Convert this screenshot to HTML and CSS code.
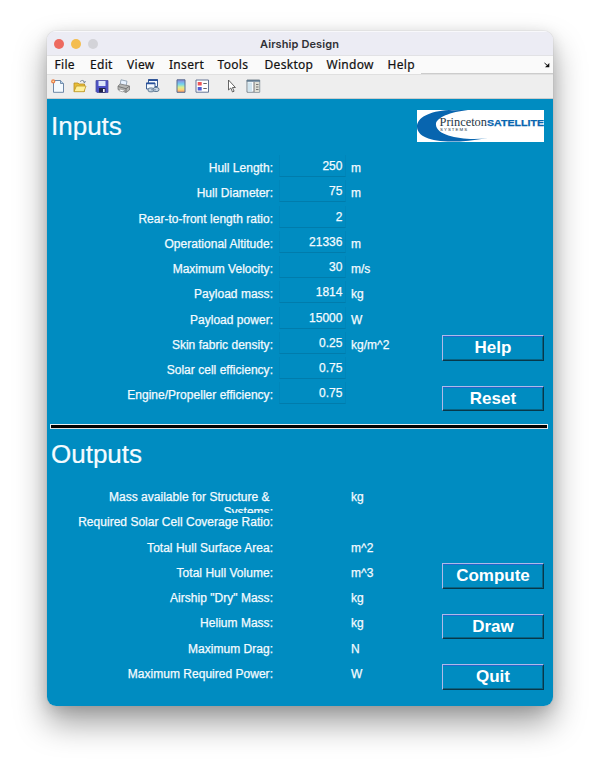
FILE: index.html
```html
<!DOCTYPE html>
<html lang="en">
<head>
<meta charset="utf-8">
<title>Airship Design</title>
<link rel="stylesheet" href="styles.css">
</head>
<body>
<main class="window">
  <header class="titlebar">
    <div class="lights"><i class="red"></i><i class="yellow"></i><i class="gray"></i></div>
    <h1>Airship Design</h1>
  </header>
  <nav class="menubar">
    <span class="file">File</span><span class="edit">Edit</span><span class="view">View</span><span class="insert">Insert</span><span class="tools">Tools</span><span class="desktop">Desktop</span><span class="win">Window</span><span class="help">Help</span>
    <div class="menu-rest"><svg width="6" height="6" viewBox="0 0 6 6"><path d="M.5 1L4 4" stroke="#111"/><path d="M5.3 1v4.3H1z" fill="#111"/></svg></div>
  </nav>
  <div class="toolbar">
    <svg width="14" height="14" viewBox="0 0 14 14"><path d="M2.5 1.5h7l3 3v8.8h-10z" fill="#f4faff" stroke="#5d7b9c" stroke-width=".9"/><path d="M9.5 1.5v3h3" fill="#b8d3ef" stroke="#5d7b9c" stroke-width=".8"/><circle cx="2.2" cy="2.4" r="2.1" fill="#e9814d"/><circle cx="2.2" cy="2.4" r=".8" fill="#ffe5a0"/></svg>
    <svg width="14" height="14" viewBox="0 0 14 14"><path d="M1 12.5V4h4l1 1h5.5v7.5z" fill="#e9bd36" stroke="#b58d22" stroke-width=".8"/><path d="M1 12.7L3.4 7H13l-2 5.7z" fill="#fff09a" stroke="#bd982a" stroke-width=".8"/><path d="M7 2.8c2-2.2 4-1.4 4.5.7M10.2 2.7l1.4 1 .9-1.5" fill="none" stroke="#66778c" stroke-width=".9"/></svg>
    <svg width="14" height="14" viewBox="0 0 14 14"><path d="M1 1.5h12v12H2l-1-1z" fill="#4b50c5" stroke="#4d50a0" stroke-width=".8"/><path d="M3.5 2h7v5h-7z" fill="#dce7fa"/><path d="M4 9h6.5v4.5H4z" fill="#202348"/><path d="M8 10h1.7v3H8z" fill="#f2f4ff"/></svg>
    <svg width="14" height="14" viewBox="0 0 14 14"><path d="M3 6L4 .8l6 1.4-1 5z" fill="#e7f2ff" stroke="#8296aa" stroke-width=".8"/><path d="M1 7l2.3-2 9.2 2v4l-3.5 2.5L1 10.5z" fill="#b5b6b4" stroke="#777" stroke-width=".8"/><path d="M1.3 7.5L9 9.7l3.2-2.4M9 9.7v3.6" fill="none" stroke="#666" stroke-width=".8"/><path d="M3 10l4.5 1.3L6 13l-4-1.3z" fill="#fff" stroke="#777" stroke-width=".5"/></svg>
    <svg class="link" width="15" height="15" viewBox="0 0 15 15"><path d="M3.5 1.5h9v7h-9z" fill="#f4faff" stroke="#3c5f94"/><path d="M3 2.2h10" stroke="#28509c" stroke-width="1.6"/><path d="M1.5 5h8.5v6H1.5z" fill="#f4faff" stroke="#3c5f94"/><path d="M1 5.5h9" stroke="#28509c" stroke-width="1.6"/><rect x="3" y="10" width="6" height="3.8" rx="1.9" fill="#c7d6e5" stroke="#647d96"/><rect x="8" y="9.5" width="6" height="4" rx="2" fill="#c7d6e5" stroke="#647d96"/><path d="M6 11.8h5" stroke="#8195a8"/></svg>
    <svg class="colorbar" width="14" height="14" viewBox="0 0 14 14"><defs><linearGradient id="bar" x2="0" y2="1"><stop stop-color="#8c82df"/><stop offset=".35" stop-color="#72d4ee"/><stop offset=".6" stop-color="#d8ef91"/><stop offset=".8" stop-color="#ffd474"/><stop offset="1" stop-color="#f28c68"/></linearGradient></defs><path d="M3 .8h8v12.5H3z" fill="url(#bar)" stroke="#596d8d"/></svg>
    <svg class="legend" width="15" height="14" viewBox="0 0 15 14"><path d="M1 1h12.5v12.2H1z" fill="#fff" stroke="#647596"/><path d="M2.7 2.9h4v3.5h-4z" fill="#ee5557"/><path d="M2.7 7.9h4v3.5h-4z" fill="#4e5bd2"/><path d="M8.3 4.5h3.5M8.3 9.5h3.5" stroke="#666" stroke-width="1.2"/></svg>
    <svg class="pointer" width="14" height="14" viewBox="0 0 14 14"><path d="M3.5 1v10l2.3-2 1.7 4 1.6-.8-1.7-3.7h3z" fill="#fff" stroke="#555" stroke-width=".9"/></svg>
    <svg class="inspector" width="15" height="14" viewBox="0 0 15 14"><path d="M1 1h12.7v12.2H1z" fill="#f8fcff" stroke="#77858f"/><path d="M.8 1.8h13" stroke="#627b90" stroke-width="1.8"/><path d="M8 3h5.3v10H8z" fill="#dedfd6"/><path d="M8 3v10" stroke="#777"/><path d="M10 5.5h2.5M10 8h2.5M10 10.5h2.5" stroke="#777"/><path d="M2 3.5h4v9H2z" fill="#d1e5ef"/></svg>
  </div>
  <section class="inputs">
    <div class="heading"><h2>Inputs</h2>
      <svg class="logo" width="127" height="32" viewBox="0 0 127 32"><path fill="#fff" d="M0 0h127v32H0z"/><path d="M51 0C44 0 38 .5 32 0 12 1 0 8 0 16.5 0 30 26 36 71 28 50 31 20 27 19 15 18 8 33 2 51 0z" fill="#0865af"/><text x="22.5" y="16" textLength="47.5" lengthAdjust="spacingAndGlyphs" font-family="Liberation Serif, serif" font-size="12" fill="#263746">Princeton</text><text x="70" y="16" textLength="57" lengthAdjust="spacingAndGlyphs" font-family="Liberation Sans, sans-serif" font-weight="bold" font-size="9" fill="#0865af" stroke="#0865af" stroke-width=".25">SATELLITE</text><text x="23" y="21.3" textLength="27" font-family="Liberation Sans, sans-serif" font-size="4.3" fill="#263746">SYSTEMS</text></svg>
    </div>
    <div class="content">
      <div class="form">
        <div class="row"><label>Hull Length:</label><output>250</output><span>m</span></div>
        <div class="row"><label>Hull Diameter:</label><output>75</output><span>m</span></div>
        <div class="row"><label>Rear-to-front length ratio:</label><output>2</output><span></span></div>
        <div class="row"><label>Operational Altitude:</label><output>21336</output><span>m</span></div>
        <div class="row"><label>Maximum Velocity:</label><output>30</output><span>m/s</span></div>
        <div class="row"><label>Payload mass:</label><output>1814</output><span>kg</span></div>
        <div class="row"><label>Payload power:</label><output>15000</output><span>W</span></div>
        <div class="row"><label>Skin fabric density:</label><output>0.25</output><span>kg/m^2</span></div>
        <div class="row"><label>Solar cell efficiency:</label><output>0.75</output><span></span></div>
        <div class="row"><label>Engine/Propeller efficiency:</label><output>0.75</output><span></span></div>
      </div>
      <div class="actions"><button>Help</button><button>Reset</button></div>
    </div>
  </section>
  <div class="divider"></div>
  <section class="outputs">
    <div class="heading"><h2>Outputs</h2></div>
    <div class="content">
      <div class="form">
        <div class="row"><label class="wrapped">Mass available for Structure &amp;&nbsp;<br>Systems:</label><b></b><span>kg</span></div>
        <div class="row"><label>Required Solar Cell Coverage Ratio:</label><b></b><span></span></div>
        <div class="row"><label>Total Hull Surface Area:</label><b></b><span>m^2</span></div>
        <div class="row"><label>Total Hull Volume:</label><b></b><span>m^3</span></div>
        <div class="row"><label>Airship "Dry" Mass:</label><b></b><span>kg</span></div>
        <div class="row"><label>Helium Mass:</label><b></b><span>kg</span></div>
        <div class="row"><label>Maximum Drag:</label><b></b><span>N</span></div>
        <div class="row"><label>Maximum Required Power:</label><b></b><span>W</span></div>
      </div>
      <div class="actions"><button>Compute</button><button>Draw</button><button>Quit</button></div>
    </div>
  </section>
</main>
</body>
</html>
```
FILE: styles.css
```css
* { box-sizing: border-box; }
body { margin: 0; height: 768px; overflow: hidden; background: #fff; font-family: "Liberation Sans", sans-serif; }
.window { width: 506px; height: 675px; margin: 31px 0 0 47px; overflow: hidden; border-radius: 9px; background: linear-gradient(#ececf4 50px, #008cc1 50px); box-shadow: 0 0 1px #999, 0 17px 32px rgba(0,0,0,.38), 0 3px 14px rgba(0,0,0,.12); }
.titlebar { height: 25px; background: #ececf4; display: grid; grid-template-columns: 100px 1fr 100px; align-items: center; border-top: 1px solid #f8f8fb; border-bottom: 1px solid #e2e2e5; }
.lights { display: flex; gap: 7px; padding-left: 7px; }
.lights i { width: 10px; height: 10px; border-radius: 50%; }
.red { background: #ed6a5f; }
.yellow { background: #f4bd4f; }
.gray { background: #d3d3d8; }
h1 { margin: 0; padding-right: 1px; text-align: center; font: 600 11px/14px Inter, sans-serif; letter-spacing: .1px; color: #303036; }
.menubar { height: 18px; display: flex; background: #fafafa; color: #111; font: 12px/17px "Noto Sans", sans-serif; letter-spacing: .3px; padding-left: 7.5px; white-space: nowrap; -webkit-text-stroke: .2px #111; }
.file { width: 35.5px; } .edit { width: 37px; } .view { width: 42px; } .insert { width: 48.5px; } .tools { width: 47px; } .desktop { width: 62px; } .win { width: 61px; } .help { width: 33px; }
.menu-rest { flex: 1; display: flex; justify-content: flex-end; align-items: center; padding-right: 3px; border-bottom: 1px solid #ccc; }
.toolbar { height: 25px; padding: 0 5px 2px 4px; display: flex; align-items: center; gap: 8px; background: #eee; border-top: 1px solid #e0e0e0; border-bottom: 1px solid #ccc; }
.toolbar .link { margin-left: 6px; }
.toolbar .colorbar { margin-left: 6px; }
.toolbar .legend { margin-left: -1px; }
.toolbar .pointer { margin-left: 7px; }
.toolbar .inspector { margin-left: -1px; }
section { color: #f4fbff; }
.inputs { height: 325px; }
.heading { display: flex; justify-content: space-between; padding-left: 4px; padding-right: 9px; }
.inputs .heading { height: 56px; padding-top: 11px; }
.outputs .heading { height: 55px; padding-top: 9px; }
h2 { margin: 0; font: 26px/32px "Liberation Sans", sans-serif; -webkit-text-stroke: .2px #fff; }
.content { display: flex; }
.form { width: 395px; }
.row { display: grid; grid-template-columns: 226px 67px 1fr; column-gap: 5.5px; height: 25.25px; font-size: 12px; letter-spacing: .02px; -webkit-text-stroke: .25px #f4fbff; }
.row label { height: 25px; line-height: 15px; padding-top: 6px; text-align: right; white-space: nowrap; }
.row .wrapped { height: 29px; overflow: hidden; line-height: 14.5px; }
.row output { height: 22px; line-height: 22px; padding-right: 2px; text-align: right; border: 1px solid #0086ba; border-bottom-color: #007cac; border-top: 0; }
.row span { line-height: 15px; padding-top: 6px; }
.actions { display: flex; flex-direction: column; gap: 25px; width: 102px; }
.inputs .actions { padding-top: 180px; }
.outputs .actions { padding-top: 79px; }
button { height: 25.5px; padding: 1px 0 0; background: #008cc1; border: 1px solid; border-color: #b0b9e8 #06384b #06384b #b0b9e8; box-shadow: inset 0 1px #2267cb, inset -1px -1px #096383; color: #fff; font: 700 17px "Liberation Sans", sans-serif; }
.divider { height: 5px; margin: 0 5px 0 3px; background: #000; border: 1px solid #e7edef; border-bottom: 1.5px solid #ddd; }
```
